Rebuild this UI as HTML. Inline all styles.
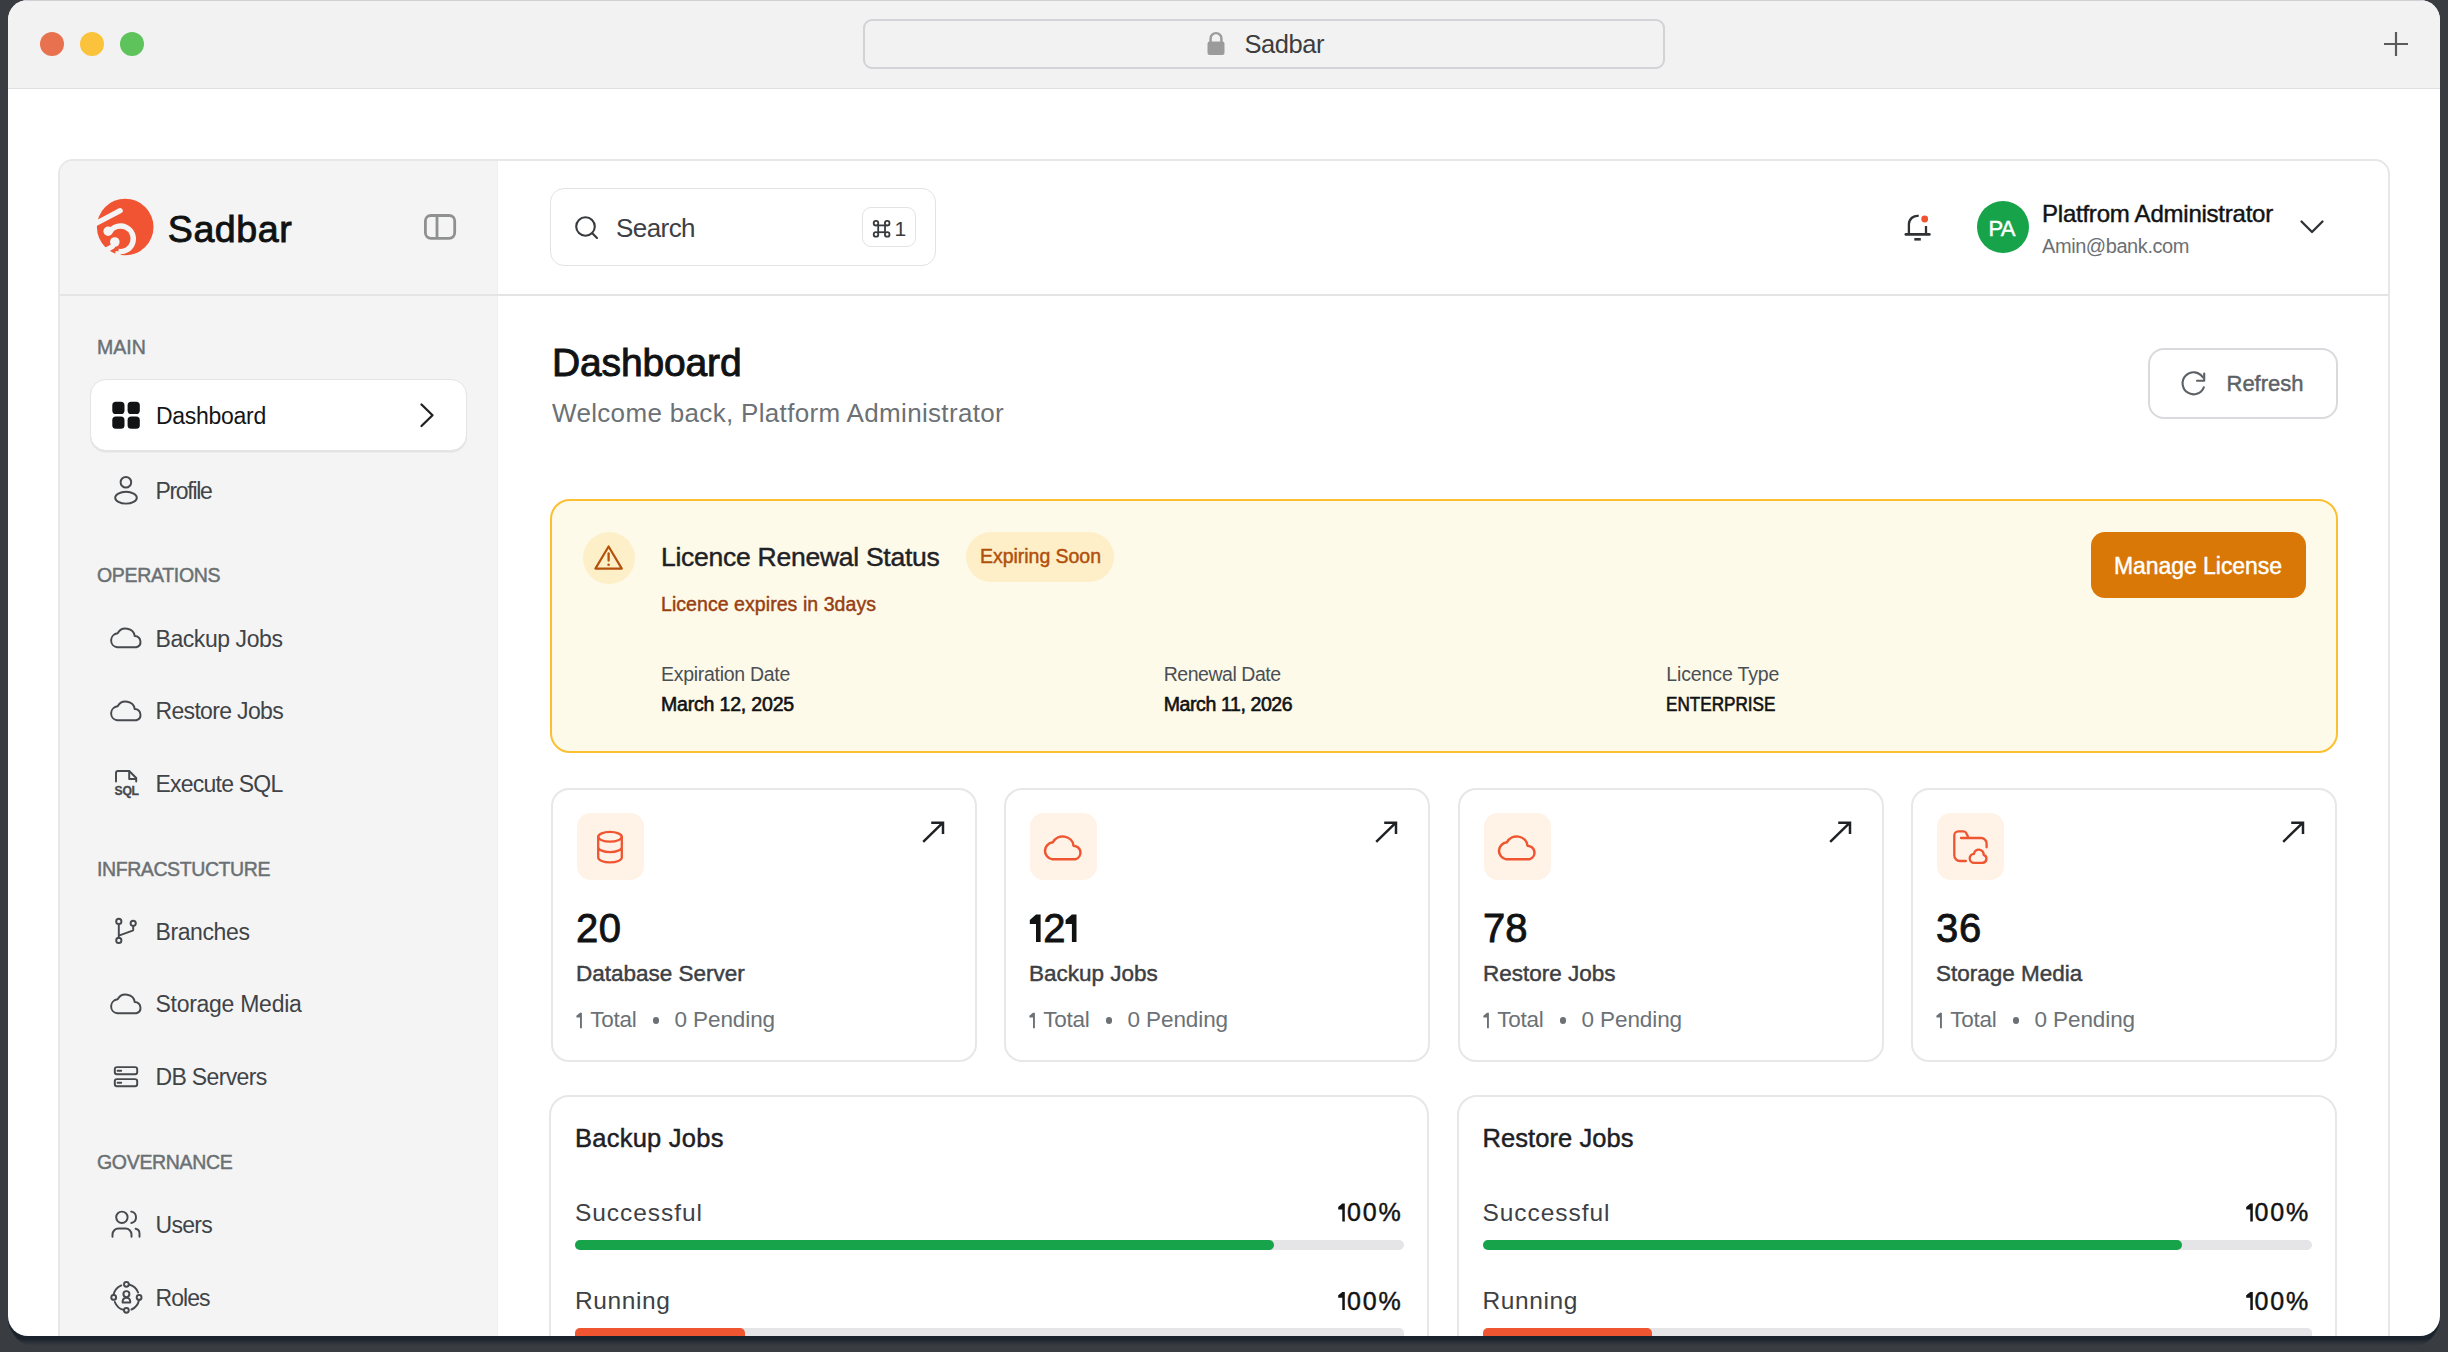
<!DOCTYPE html>
<html><head><meta charset="utf-8"><title>Sadbar</title>
<style>
*{box-sizing:border-box;margin:0;padding:0}
html,body{width:2448px;height:1352px;overflow:hidden;background:#393d41}
body{position:relative;font-family:"Liberation Sans",sans-serif}
.t{position:absolute;line-height:1;white-space:nowrap}
.b{position:absolute}
.i{position:absolute;overflow:visible}
.m{-webkit-text-stroke:0.45px currentColor}
.s{-webkit-text-stroke:0.85px currentColor}
.bd{font-weight:bold}
</style></head><body>
<div class="b" style="left:8px;top:1300px;width:2432px;height:41px;background:#1a222c;border-radius:0 0 22px 22px;"></div>
<div class="b" style="left:10px;top:1320px;width:2428px;height:26px;background:linear-gradient(#1a222c 72%,#393d41);border-radius:0 0 24px 24px;opacity:.85"></div>
<div id="win" style="position:absolute;left:8px;top:0;width:2432px;height:1336px;border-radius:20px;overflow:hidden;background:#fff"><div style="position:absolute;left:-8px;top:0;width:2448px;height:1352px">
<div class="b" style="left:0px;top:0px;width:2448px;height:88px;background:#f2f2f2"></div>
<div class="b" style="left:0px;top:0px;width:2448px;height:1px;background:#cfd0d4"></div>
<div class="b" style="left:0px;top:88px;width:2448px;height:1px;background:#dfdfe1"></div>
<div class="b" style="left:40px;top:32px;width:24px;height:24px;background:#e8714f;border-radius:50%"></div>
<div class="b" style="left:80px;top:32px;width:24px;height:24px;background:#fbc23c;border-radius:50%"></div>
<div class="b" style="left:120px;top:32px;width:24px;height:24px;background:#5ec35b;border-radius:50%"></div>
<div class="b" style="left:863px;top:19px;width:802px;height:50px;border:2px solid #d2d2d7;border-radius:9px;background:#f2f2f2"></div>
<svg class="i" style="left:1204px;top:28px;" width="24" height="30" viewBox="1204 28 24 30" fill="none"><path d="M1210.6 42 V38.5 A5.4 5.4 0 0 1 1221.4 38.5 V42" stroke="#9b9b9b" stroke-width="2.4"/><rect x="1207.5" y="41.5" width="17" height="13.5" rx="2.2" fill="#9b9b9b"/></svg>
<div class="t " style="left:1244.5px;top:31.71px;font-size:25.5px;color:#3d3d3d;letter-spacing:-0.454px;">Sadbar</div>
<svg class="i" style="left:2380px;top:28px;" width="32" height="32" viewBox="2380 28 32 32" fill="none"><path d="M2384 44 H2408 M2396 32 V56" stroke="#5b5b5b" stroke-width="2.2"/></svg>
<div class="b" style="left:58px;top:159px;width:2332px;height:1241px;border:2px solid #e7e7e8;border-radius:15px;background:#fff;"></div>
<div class="b" style="left:60px;top:161px;width:438px;height:1239px;background:#f4f4f4;border-radius:13px 0 0 0;"></div>
<div class="b" style="left:497px;top:161px;width:1px;height:1239px;background:#f0f0f0"></div>
<div class="b" style="left:60px;top:294px;width:2328px;height:1.6000000000000227px;background:#e4e4e6"></div>
<svg class="i" style="left:94px;top:195px;" width="64" height="65" viewBox="94 195 64 65" fill="none"><circle cx="125.2" cy="227" r="28.3" fill="#f05433"/><path d="M93 225 L120.2 210.6" stroke="#f4f4f4" stroke-width="5.2" stroke-linecap="round"/><path d="M109.65 232 A12.8 12.8 0 1 1 118.3 251.4" stroke="#f4f4f4" stroke-width="5.4"/><path d="M118.3 251.4 L117.5 258" stroke="#f4f4f4" stroke-width="5.4"/><circle cx="108.1" cy="231.3" r="4.7" fill="#f4f4f4"/><circle cx="114.8" cy="242" r="4.8" fill="#f4f4f4"/><path d="M112.5 246.5 L99 254" stroke="#f4f4f4" stroke-width="5" stroke-linecap="round"/></svg>
<div class="t " style="left:167.8px;top:210.86px;font-size:37.6px;color:#101212;letter-spacing:0.542px;-webkit-text-stroke:0.9px #101212">Sadbar</div>
<svg class="i" style="left:420px;top:210px;" width="40" height="34" viewBox="420 210 40 34" fill="none"><rect x="425.4" y="215.5" width="29.3" height="22.8" rx="5.5" stroke="#8f9191" stroke-width="2.8"/><path d="M437 215.5 V238.3" stroke="#8f9191" stroke-width="2.8"/></svg>
<div class="b" style="left:550px;top:188px;width:386px;height:78px;border:1.6px solid #e3e3e4;border-radius:14px;background:#fff"></div>
<svg class="i" style="left:570px;top:210px;" width="32" height="34" viewBox="570 210 32 34" fill="none"><circle cx="585.5" cy="226.5" r="9.3" stroke="#383b3e" stroke-width="2.1"/><path d="M592.3 233.3 L597 238" stroke="#383b3e" stroke-width="2.1" stroke-linecap="round"/></svg>
<div class="t " style="left:616px;top:215.19px;font-size:26px;color:#3d4044;letter-spacing:-0.563px;">Search</div>
<div class="b" style="left:862px;top:207px;width:54px;height:40px;border:1.6px solid #e3e3e4;border-radius:9px;background:#fff"></div>
<svg class="i" style="left:870px;top:218px;" width="22" height="20" viewBox="870 218 22 20" fill="none"><rect x="878.2" y="225.4" width="6.8" height="6.8" stroke="#383b3e" stroke-width="1.8"/><circle cx="876" cy="223.2" r="2.3" stroke="#383b3e" stroke-width="1.8"/><circle cx="887.2" cy="223.2" r="2.3" stroke="#383b3e" stroke-width="1.8"/><circle cx="876" cy="234.4" r="2.3" stroke="#383b3e" stroke-width="1.8"/><circle cx="887.2" cy="234.4" r="2.3" stroke="#383b3e" stroke-width="1.8"/></svg>
<div class="t " style="left:894.5px;top:217.72px;font-size:21px;color:#383b3e;letter-spacing:-2.180px;">1</div>
<svg class="i" style="left:1900px;top:210px;" width="35" height="35" viewBox="1900 210 35 35" fill="none"><path d="M1908.9 233.3 V224 A8.5 8.5 0 0 1 1918.7 215.9" stroke="#2f3235" stroke-width="2.3"/><path d="M1926 226 V233.3" stroke="#2f3235" stroke-width="2.3"/><path d="M1905.8 234.4 H1929.4" stroke="#2f3235" stroke-width="2.6" stroke-linecap="round"/><path d="M1914.3 239.3 H1920.8" stroke="#2f3235" stroke-width="2.6"/><circle cx="1924.7" cy="219" r="3.4" fill="#f0532f"/></svg>
<div class="b" style="left:1977px;top:201px;width:52px;height:52px;background:#17a34a;border-radius:50%"></div>
<div class="t m" style="left:1988.5px;top:218.37px;font-size:22px;color:#ffffff;letter-spacing:-0.857px;">PA</div>
<div class="t m" style="left:2042px;top:201.68px;font-size:24px;color:#121314;letter-spacing:-0.231px;">Platfrom Administrator</div>
<div class="t " style="left:2042px;top:236.07px;font-size:20px;color:#6b7074;letter-spacing:-0.429px;">Amin@bank.com</div>
<svg class="i" style="left:2296px;top:216px;" width="32" height="22" viewBox="2296 216 32 22" fill="none"><path d="M2301.5 221.5 L2312 232 L2322.5 221.5" stroke="#2f3235" stroke-width="2.3" stroke-linecap="round" stroke-linejoin="round"/></svg>
<div class="t m" style="left:97px;top:338.09px;font-size:19.5px;color:#6a7073;letter-spacing:0.062px;">MAIN</div>
<div class="t m" style="left:97px;top:566.49px;font-size:19.5px;color:#6a7073;letter-spacing:-0.321px;">OPERATIONS</div>
<div class="t m" style="left:97px;top:860.29px;font-size:19.5px;color:#6a7073;letter-spacing:-0.411px;">INFRACSTUCTURE</div>
<div class="t m" style="left:97px;top:1152.89px;font-size:19.5px;color:#6a7073;letter-spacing:-0.319px;">GOVERNANCE</div>
<div class="b" style="left:90px;top:379px;width:376.5px;height:72px;background:#fff;border:1.7px solid #e4e4e6;border-radius:16px;box-shadow:0 1.5px 0.5px #e3e3e5"></div>
<svg class="i" style="left:108px;top:398px;" width="36" height="34" viewBox="108 398 36 34" fill="none"><rect x="112.3" y="401.8" width="12.2" height="12.2" rx="3.6" fill="#121314"/><rect x="127.6" y="401.8" width="12.2" height="12.2" rx="3.6" fill="#121314"/><rect x="112.3" y="416.6" width="12.2" height="12.2" rx="3.6" fill="#121314"/><rect x="127.6" y="416.6" width="12.2" height="12.2" rx="3.6" fill="#121314"/></svg>
<div class="t " style="left:156px;top:404.53px;font-size:23px;color:#141516;letter-spacing:-0.280px;">Dashboard</div>
<svg class="i" style="left:416px;top:400px;" width="24" height="30" viewBox="416 400 24 30" fill="none"><path d="M421.5 404.5 L432.5 415.2 L421.5 426" stroke="#1f2123" stroke-width="2.3" stroke-linecap="round" stroke-linejoin="round"/></svg>
<div class="t " style="left:155.5px;top:479.73px;font-size:23px;color:#404347;letter-spacing:-1.313px;">Profile</div>
<div class="t " style="left:155.5px;top:627.53px;font-size:23px;color:#404347;letter-spacing:-0.427px;">Backup Jobs</div>
<svg class="i" style="left:108px;top:625.2px;" width="36" height="26.0" viewBox="108 625.2 36 26.0" fill="none"><g transform="translate(0 0.0) translate(125.8 647.5) scale(1.10 1.03) translate(-125.8 -647.5)"><path d="M118 647.5 H135.3 A5.6 5.6 0 0 0 133.9 636.6 A8.2 8.2 0 0 0 118.4 633.9 A6.9 6.9 0 0 0 118 647.5 Z" stroke="#46494d" stroke-width="1.95" stroke-linecap="round" stroke-linejoin="round" vector-effect="non-scaling-stroke"/></g></svg>
<div class="t " style="left:155.5px;top:700.23px;font-size:23px;color:#404347;letter-spacing:-0.668px;">Restore Jobs</div>
<svg class="i" style="left:108px;top:697.9000000000001px;" width="36" height="26.0" viewBox="108 697.9000000000001 36 26.0" fill="none"><g transform="translate(0 72.70000000000005) translate(125.8 647.5) scale(1.10 1.03) translate(-125.8 -647.5)"><path d="M118 647.5 H135.3 A5.6 5.6 0 0 0 133.9 636.6 A8.2 8.2 0 0 0 118.4 633.9 A6.9 6.9 0 0 0 118 647.5 Z" stroke="#46494d" stroke-width="1.95" stroke-linecap="round" stroke-linejoin="round" vector-effect="non-scaling-stroke"/></g></svg>
<div class="t " style="left:155.5px;top:773.13px;font-size:23px;color:#404347;letter-spacing:-0.775px;">Execute SQL</div>
<div class="t " style="left:155.5px;top:920.93px;font-size:23px;color:#404347;letter-spacing:-0.396px;">Branches</div>
<div class="t " style="left:155.5px;top:993.43px;font-size:23px;color:#404347;letter-spacing:-0.277px;">Storage Media</div>
<svg class="i" style="left:108px;top:991.1px;" width="36" height="26.0" viewBox="108 991.1 36 26.0" fill="none"><g transform="translate(0 365.9) translate(125.8 647.5) scale(1.10 1.03) translate(-125.8 -647.5)"><path d="M118 647.5 H135.3 A5.6 5.6 0 0 0 133.9 636.6 A8.2 8.2 0 0 0 118.4 633.9 A6.9 6.9 0 0 0 118 647.5 Z" stroke="#46494d" stroke-width="1.95" stroke-linecap="round" stroke-linejoin="round" vector-effect="non-scaling-stroke"/></g></svg>
<div class="t " style="left:155.5px;top:1065.83px;font-size:23px;color:#404347;letter-spacing:-0.658px;">DB Servers</div>
<div class="t " style="left:155.5px;top:1214.33px;font-size:23px;color:#404347;letter-spacing:-0.712px;">Users</div>
<div class="t " style="left:155.5px;top:1286.53px;font-size:23px;color:#404347;letter-spacing:-0.961px;">Roles</div>
<svg class="i" style="left:108px;top:470px;" width="36" height="40" viewBox="108 470 36 40" fill="none"><circle cx="125.9" cy="482.2" r="5.3" stroke="#46494d" stroke-width="1.95" stroke-linecap="round" stroke-linejoin="round"/><ellipse cx="126" cy="497.7" rx="10.8" ry="5.9" stroke="#46494d" stroke-width="1.95" stroke-linecap="round" stroke-linejoin="round"/></svg>
<svg class="i" style="left:108px;top:764px;" width="38" height="36" viewBox="108 764 38 36" fill="none"><path d="M116 781.6 V773 A2 2 0 0 1 118 771 H129.2 L136.2 778 V781.6" stroke="#46494d" stroke-width="1.95" stroke-linecap="round" stroke-linejoin="round"/><path d="M129.2 771.2 V778.9 H136" stroke="#46494d" stroke-width="1.95" stroke-linecap="round" stroke-linejoin="round"/><text x="114.6" y="794.6" font-family="Liberation Sans" font-weight="bold" font-size="12.2" fill="#46494d" letter-spacing="-0.3" stroke="#46494d" stroke-width="0.3">SQL</text></svg>
<svg class="i" style="left:108px;top:912px;" width="38" height="38" viewBox="108 912 38 38" fill="none"><circle cx="118.8" cy="921.4" r="2.6" stroke="#46494d" stroke-width="1.95" stroke-linecap="round" stroke-linejoin="round"/><circle cx="118.8" cy="940.4" r="2.6" stroke="#46494d" stroke-width="1.95" stroke-linecap="round" stroke-linejoin="round"/><circle cx="133.2" cy="923.3" r="2.6" stroke="#46494d" stroke-width="1.95" stroke-linecap="round" stroke-linejoin="round"/><path d="M118.8 924 V937.8 M118.8 935.6 L132.6 930.7 Q133.2 930.5 133.2 929.9 V926" stroke="#46494d" stroke-width="1.95" stroke-linecap="round" stroke-linejoin="round"/></svg>
<svg class="i" style="left:108px;top:1060px;" width="38" height="34" viewBox="108 1060 38 34" fill="none"><rect x="114.8" y="1067.1" width="22.4" height="7.2" rx="2.2" stroke="#46494d" stroke-width="1.95" stroke-linecap="round" stroke-linejoin="round"/><rect x="114.8" y="1079.1" width="22.4" height="7.2" rx="2.2" stroke="#46494d" stroke-width="1.95" stroke-linecap="round" stroke-linejoin="round"/><path d="M117.6 1070.7 H121.2 M117.6 1082.7 H121.2" stroke="#46494d" stroke-width="1.95" stroke-linecap="round" stroke-linejoin="round"/></svg>
<svg class="i" style="left:106px;top:1204px;" width="40" height="40" viewBox="106 1204 40 40" fill="none"><circle cx="121.9" cy="1217.3" r="5.7" stroke="#46494d" stroke-width="1.95" stroke-linecap="round" stroke-linejoin="round"/><path d="M131.3 1211.6 A5.8 5.8 0 0 1 131.3 1223" stroke="#46494d" stroke-width="1.95" stroke-linecap="round" stroke-linejoin="round"/><path d="M112.5 1236.8 V1234.5 A6 6 0 0 1 118.5 1228.5 H125.5 A6 6 0 0 1 131.5 1234.5 V1236.8" stroke="#46494d" stroke-width="1.95" stroke-linecap="round" stroke-linejoin="round"/><path d="M135.6 1228.8 A4.8 4.8 0 0 1 139.5 1233.5 V1236.8" stroke="#46494d" stroke-width="1.95" stroke-linecap="round" stroke-linejoin="round"/></svg>
<svg class="i" style="left:104px;top:1274px;" width="46" height="46" viewBox="104 1274 46 46" fill="none"><circle cx="126.4" cy="1284.3" r="2.4" stroke="#46494d" stroke-width="1.95" stroke-linecap="round" stroke-linejoin="round"/><circle cx="113.7" cy="1297.4" r="2.4" stroke="#46494d" stroke-width="1.95" stroke-linecap="round" stroke-linejoin="round"/><circle cx="139.1" cy="1297.4" r="2.4" stroke="#46494d" stroke-width="1.95" stroke-linecap="round" stroke-linejoin="round"/><circle cx="126.4" cy="1310.3" r="2.4" stroke="#46494d" stroke-width="1.95" stroke-linecap="round" stroke-linejoin="round"/><path d="M121.3 1285.4 A13 13 0 0 0 113.5 1294.8 M128.9 1284.5 A13 13 0 0 1 138.1 1292.5 M139 1300 A13 13 0 0 1 131.5 1309.5 M124 1310 A13 13 0 0 1 114.8 1302" stroke="#46494d" stroke-width="1.95" stroke-linecap="round" stroke-linejoin="round"/><circle cx="126.4" cy="1294.1" r="3" stroke="#46494d" stroke-width="1.95" stroke-linecap="round" stroke-linejoin="round"/><path d="M122.6 1302.5 V1301.5 A3.8 3.8 0 0 1 130.2 1301.5 V1302.5 Z" stroke="#46494d" stroke-width="1.95" stroke-linecap="round" stroke-linejoin="round"/></svg>
<div class="t " style="left:552px;top:342.78px;font-size:39px;color:#111213;letter-spacing:-0.144px;-webkit-text-stroke:0.95px #111213">Dashboard</div>
<div class="t " style="left:552px;top:399.99px;font-size:26px;color:#6b7175;letter-spacing:0.327px;">Welcome back, Platform Administrator</div>
<div class="b" style="left:2148px;top:348px;width:190px;height:71px;border:2px solid #d8dadd;border-radius:16px;background:#fff"></div>
<svg class="i" style="left:2176px;top:366px;" width="36" height="36" viewBox="2176 366 36 36" fill="none"><path d="M2203.8 387.3 A11 11 0 1 1 2202.8 377.3" stroke="#5c6166" stroke-width="2.1" stroke-linecap="round"/><path d="M2204.2 373.6 V380.8 H2197" stroke="#5c6166" stroke-width="2.1" stroke-linecap="round" stroke-linejoin="round"/></svg>
<div class="t m" style="left:2226.5px;top:373.37px;font-size:22px;color:#5d6266;letter-spacing:-0.005px;">Refresh</div>
<div class="b" style="left:550px;top:499px;width:1788px;height:254px;border:2px solid #fbbf2f;border-radius:20px;background:#fefae9"></div>
<div class="b" style="left:583px;top:532px;width:52px;height:52px;background:#fdf0c9;border-radius:50%"></div>
<svg class="i" style="left:590px;top:540px;" width="38" height="36" viewBox="590 540 38 36" fill="none"><path d="M608.6 546.5 L621.8 568.6 H595.4 Z" stroke="#b4520b" stroke-width="2.2" stroke-linejoin="round"/><path d="M608.6 553.5 V560.5" stroke="#b4520b" stroke-width="2.3" stroke-linecap="round"/><circle cx="608.6" cy="564.8" r="1.3" fill="#b4520b"/></svg>
<div class="t m" style="left:661px;top:543.56px;font-size:26.5px;color:#1e2227;letter-spacing:-0.264px;">Licence Renewal Status</div>
<div class="b" style="left:966px;top:532px;width:148px;height:50px;background:#feefc8;border-radius:25px"></div>
<div class="t m" style="left:980px;top:546.99px;font-size:19.5px;color:#b1500c;letter-spacing:-0.032px;">Expiring Soon</div>
<div class="t m" style="left:661px;top:595.49px;font-size:19.5px;color:#973f13;letter-spacing:0.061px;">Licence expires in 3days</div>
<div class="t " style="left:661px;top:664.99px;font-size:19.5px;color:#4a4f55;letter-spacing:-0.288px;">Expiration Date</div>
<div class="t " style="left:661px;top:694.69px;font-size:19.5px;color:#111213;letter-spacing:-0.179px;-webkit-text-stroke:0.6px #111213">March 12, 2025</div>
<div class="t " style="left:1163.7px;top:664.99px;font-size:19.5px;color:#4a4f55;letter-spacing:-0.457px;">Renewal Date</div>
<div class="t " style="left:1163.7px;top:694.69px;font-size:19.5px;color:#111213;letter-spacing:-0.390px;-webkit-text-stroke:0.6px #111213">March 11, 2026</div>
<div class="t " style="left:1666.3px;top:664.99px;font-size:19.5px;color:#4a4f55;letter-spacing:-0.130px;">Licence Type</div>
<div class="t " style="left:1666.3px;top:694.69px;font-size:19.5px;color:#111213;transform:scaleX(0.8780);transform-origin:0 0;-webkit-text-stroke:0.6px #111213">ENTERPRISE</div>
<div class="b" style="left:2091px;top:532px;width:215px;height:66px;background:#d97707;border-radius:14px"></div>
<div class="t m" style="left:2114px;top:554.53px;font-size:23px;color:#ffffff;letter-spacing:-0.056px;">Manage License</div>
<div class="b" style="left:551px;top:788px;width:426px;height:274px;border:2px solid #e7e7e8;border-radius:18px;background:#fff"></div>
<div class="b" style="left:576.5px;top:813px;width:67.0px;height:67px;background:#fff2e7;border-radius:14px"></div>
<svg class="i" style="left:590.0px;top:824.5px;" width="40.0" height="44.0" viewBox="590.0 824.5 40.0 44.0" fill="none"><ellipse cx="610.0" cy="836.3" rx="11.8" ry="4.9" stroke="#ef5530" stroke-width="2.3" stroke-linecap="round" stroke-linejoin="round"/><path d="M598.2 836.3 V857.0 A11.8 4.9 0 0 0 621.8 857.0 V836.3 M598.2 846.7 A11.8 4.9 0 0 0 621.8 846.7" stroke="#ef5530" stroke-width="2.3" stroke-linecap="round" stroke-linejoin="round"/></svg>
<svg class="i" style="left:918px;top:817px;" width="30" height="31" viewBox="918 817 30 31" fill="none"><path d="M923.2 841.8 L942.6 822.9 M931.2 822.8 H943 V834" stroke="#1f2225" stroke-width="2.5" stroke-linecap="butt" stroke-linejoin="miter"/></svg>
<div class="t s" style="left:576px;top:908.13px;font-size:40px;color:#111213;letter-spacing:0.503px;">20</div>
<div class="t m" style="left:576px;top:962.55px;font-size:22.5px;color:#3c4044;">Database Server</div>
<svg class="i" style="left:573px;top:1008px;" width="16" height="24" viewBox="573 1008 16 24" fill="none"><path d="M581.90 1012.80 V1028.30 H580.00 V1017.60 H576.40 V1015.80 L580.00 1012.80 Z" fill="#6b7175"/></svg>
<div class="t " style="left:590.3px;top:1009.25px;font-size:22.5px;color:#6b7175;letter-spacing:-0.246px;">Total</div>
<div class="b" style="left:652.8px;top:1017.2px;width:6.400000000000091px;height:6.399999999999977px;background:#6b7175;border-radius:50%"></div>
<div class="t " style="left:674.5px;top:1009.25px;font-size:22.5px;color:#6b7175;letter-spacing:-0.094px;">0 Pending</div>
<div class="b" style="left:1004px;top:788px;width:426px;height:274px;border:2px solid #e7e7e8;border-radius:18px;background:#fff"></div>
<div class="b" style="left:1029.5px;top:813px;width:67.0px;height:67px;background:#fff2e7;border-radius:14px"></div>
<svg class="i" style="left:1037.0px;top:826.5px;" width="52.0" height="40.0" viewBox="1037.0 826.5 52.0 40.0" fill="none"><g transform="translate(1063.0 846.9) scale(1.33 1.26) translate(-126 -638)"><path d="M118 647.5 H135.3 A5.6 5.6 0 0 0 133.9 636.6 A8.2 8.2 0 0 0 118.4 633.9 A6.9 6.9 0 0 0 118 647.5 Z" stroke="#ef5530" stroke-width="2.5" vector-effect="non-scaling-stroke" stroke-linejoin="round"/></g></svg>
<svg class="i" style="left:1371px;top:817px;" width="30" height="31" viewBox="1371 817 30 31" fill="none"><path d="M1376.2 841.8 L1395.6 822.9 M1384.2 822.8 H1396 V834" stroke="#1f2225" stroke-width="2.5" stroke-linecap="butt" stroke-linejoin="miter"/></svg>
<svg class="i" style="left:1025px;top:910px;" width="57" height="36" viewBox="1025 910 57 36" fill="none"><path d="M1040.60 914.50 V942.00 H1036.00 V924.10 H1029.80 V920.10 L1036.00 914.50 Z M1076.50 914.50 V942.00 H1071.90 V924.10 H1065.60 V920.10 L1071.90 914.50 Z" fill="#111213"/></svg>
<div class="t s" style="left:1043.2px;top:908.13px;font-size:40px;color:#111213;">2</div>
<div class="t m" style="left:1029px;top:962.55px;font-size:22.5px;color:#3c4044;">Backup Jobs</div>
<svg class="i" style="left:1026px;top:1008px;" width="16" height="24" viewBox="1026 1008 16 24" fill="none"><path d="M1034.90 1012.80 V1028.30 H1033.00 V1017.60 H1029.40 V1015.80 L1033.00 1012.80 Z" fill="#6b7175"/></svg>
<div class="t " style="left:1043.3px;top:1009.25px;font-size:22.5px;color:#6b7175;letter-spacing:-0.246px;">Total</div>
<div class="b" style="left:1105.8px;top:1017.2px;width:6.400000000000091px;height:6.399999999999977px;background:#6b7175;border-radius:50%"></div>
<div class="t " style="left:1127.5px;top:1009.25px;font-size:22.5px;color:#6b7175;letter-spacing:-0.094px;">0 Pending</div>
<div class="b" style="left:1458px;top:788px;width:426px;height:274px;border:2px solid #e7e7e8;border-radius:18px;background:#fff"></div>
<div class="b" style="left:1483.5px;top:813px;width:67.0px;height:67px;background:#fff2e7;border-radius:14px"></div>
<svg class="i" style="left:1491.0px;top:826.5px;" width="52.0" height="40.0" viewBox="1491.0 826.5 52.0 40.0" fill="none"><g transform="translate(1517.0 846.9) scale(1.33 1.26) translate(-126 -638)"><path d="M118 647.5 H135.3 A5.6 5.6 0 0 0 133.9 636.6 A8.2 8.2 0 0 0 118.4 633.9 A6.9 6.9 0 0 0 118 647.5 Z" stroke="#ef5530" stroke-width="2.5" vector-effect="non-scaling-stroke" stroke-linejoin="round"/></g></svg>
<svg class="i" style="left:1825px;top:817px;" width="30" height="31" viewBox="1825 817 30 31" fill="none"><path d="M1830.2 841.8 L1849.6 822.9 M1838.2 822.8 H1850 V834" stroke="#1f2225" stroke-width="2.5" stroke-linecap="butt" stroke-linejoin="miter"/></svg>
<div class="t s" style="left:1483px;top:908.13px;font-size:40px;color:#111213;letter-spacing:0.003px;">78</div>
<div class="t m" style="left:1483px;top:962.55px;font-size:22.5px;color:#3c4044;">Restore Jobs</div>
<svg class="i" style="left:1480px;top:1008px;" width="16" height="24" viewBox="1480 1008 16 24" fill="none"><path d="M1488.90 1012.80 V1028.30 H1487.00 V1017.60 H1483.40 V1015.80 L1487.00 1012.80 Z" fill="#6b7175"/></svg>
<div class="t " style="left:1497.3px;top:1009.25px;font-size:22.5px;color:#6b7175;letter-spacing:-0.246px;">Total</div>
<div class="b" style="left:1559.8px;top:1017.2px;width:6.400000000000091px;height:6.399999999999977px;background:#6b7175;border-radius:50%"></div>
<div class="t " style="left:1581.5px;top:1009.25px;font-size:22.5px;color:#6b7175;letter-spacing:-0.094px;">0 Pending</div>
<div class="b" style="left:1911px;top:788px;width:426px;height:274px;border:2px solid #e7e7e8;border-radius:18px;background:#fff"></div>
<div class="b" style="left:1936.5px;top:813px;width:67.0px;height:67px;background:#fff2e7;border-radius:14px"></div>
<svg class="i" style="left:1946px;top:822px;" width="48" height="48" viewBox="1946 822 48 48" fill="none"><path d="M1965.9 861 H1960 A5.7 5.7 0 0 1 1954.3 855.3 V835.4 A4 4 0 0 1 1958.3 831.4 H1963.3 A3.5 3.5 0 0 1 1966.5 833.5 L1968.6 837.9 M1961 838 H1981 A5.6 5.6 0 0 1 1986.6 843.6 V847.3" stroke="#ef5530" stroke-width="2.3" stroke-linecap="round" stroke-linejoin="round"/><path d="M1974.3 862.8 H1982.5 A4.1 4.1 0 0 0 1983.6 854.8 A4.6 4.6 0 0 0 1974 853.9 A4.3 4.3 0 0 0 1974.3 862.8 Z" stroke="#ef5530" stroke-width="2.3" stroke-linecap="round" stroke-linejoin="round"/></svg>
<svg class="i" style="left:2278px;top:817px;" width="30" height="31" viewBox="2278 817 30 31" fill="none"><path d="M2283.2 841.8 L2302.6 822.9 M2291.2 822.8 H2303 V834" stroke="#1f2225" stroke-width="2.5" stroke-linecap="butt" stroke-linejoin="miter"/></svg>
<div class="t s" style="left:1936px;top:908.13px;font-size:40px;color:#111213;letter-spacing:0.753px;">36</div>
<div class="t m" style="left:1936px;top:962.55px;font-size:22.5px;color:#3c4044;">Storage Media</div>
<svg class="i" style="left:1933px;top:1008px;" width="16" height="24" viewBox="1933 1008 16 24" fill="none"><path d="M1941.90 1012.80 V1028.30 H1940.00 V1017.60 H1936.40 V1015.80 L1940.00 1012.80 Z" fill="#6b7175"/></svg>
<div class="t " style="left:1950.3px;top:1009.25px;font-size:22.5px;color:#6b7175;letter-spacing:-0.246px;">Total</div>
<div class="b" style="left:2012.8px;top:1017.2px;width:6.400000000000091px;height:6.399999999999977px;background:#6b7175;border-radius:50%"></div>
<div class="t " style="left:2034.5px;top:1009.25px;font-size:22.5px;color:#6b7175;letter-spacing:-0.094px;">0 Pending</div>
<div class="b" style="left:549px;top:1095px;width:880px;height:405px;border:2px solid #e7e7e8;border-radius:20px;background:#fff"></div>
<div class="t m" style="left:575px;top:1125.61px;font-size:25.5px;color:#1d2024;letter-spacing:0.246px;">Backup Jobs</div>
<div class="t " style="left:575px;top:1200.76px;font-size:24.5px;color:#3d4145;letter-spacing:0.953px;">Successful</div>
<svg class="i" style="left:1335px;top:1200px;" width="14" height="25" viewBox="1335 1200 14 25" fill="none"><path d="M1344.80 1203.60 V1221.60 H1342.30 V1209.40 H1338.20 V1207.00 L1342.30 1203.60 Z" fill="#121314"/></svg>
<div class="t m" style="right:1045.5px;top:1200.33px;font-size:25px;color:#121314;letter-spacing:1.821px;">00%</div>
<div class="b" style="left:575px;top:1240px;width:829px;height:9.5px;background:#e5e5e7;border-radius:5px"></div>
<div class="b" style="left:575px;top:1240px;width:699px;height:9.5px;background:#17a34a;border-radius:5px"></div>
<div class="t " style="left:575px;top:1289.06px;font-size:24.5px;color:#3d4145;letter-spacing:0.591px;">Running</div>
<svg class="i" style="left:1335px;top:1288px;" width="14" height="25" viewBox="1335 1288 14 25" fill="none"><path d="M1344.80 1291.90 V1309.90 H1342.30 V1297.70 H1338.20 V1295.30 L1342.30 1291.90 Z" fill="#121314"/></svg>
<div class="t m" style="right:1045.5px;top:1288.63px;font-size:25px;color:#121314;letter-spacing:1.821px;">00%</div>
<div class="b" style="left:575px;top:1327.5px;width:829px;height:22.5px;background:#e5e5e7;border-radius:5px"></div>
<div class="b" style="left:575px;top:1327.5px;width:169.5px;height:22.5px;background:#ef5530;border-radius:5px"></div>
<div class="b" style="left:1456.5px;top:1095px;width:880.0px;height:405px;border:2px solid #e7e7e8;border-radius:20px;background:#fff"></div>
<div class="t m" style="left:1482.5px;top:1125.61px;font-size:25.5px;color:#1d2024;letter-spacing:0.064px;">Restore Jobs</div>
<div class="t " style="left:1482.5px;top:1200.76px;font-size:24.5px;color:#3d4145;letter-spacing:0.953px;">Successful</div>
<svg class="i" style="left:2242.5px;top:1200px;" width="14.0" height="25" viewBox="2242.5 1200 14.0 25" fill="none"><path d="M2252.30 1203.60 V1221.60 H2249.80 V1209.40 H2245.70 V1207.00 L2249.80 1203.60 Z" fill="#121314"/></svg>
<div class="t m" style="right:138.0px;top:1200.33px;font-size:25px;color:#121314;letter-spacing:1.821px;">00%</div>
<div class="b" style="left:1482.5px;top:1240px;width:829.0px;height:9.5px;background:#e5e5e7;border-radius:5px"></div>
<div class="b" style="left:1482.5px;top:1240px;width:699.0px;height:9.5px;background:#17a34a;border-radius:5px"></div>
<div class="t " style="left:1482.5px;top:1289.06px;font-size:24.5px;color:#3d4145;letter-spacing:0.591px;">Running</div>
<svg class="i" style="left:2242.5px;top:1288px;" width="14.0" height="25" viewBox="2242.5 1288 14.0 25" fill="none"><path d="M2252.30 1291.90 V1309.90 H2249.80 V1297.70 H2245.70 V1295.30 L2249.80 1291.90 Z" fill="#121314"/></svg>
<div class="t m" style="right:138.0px;top:1288.63px;font-size:25px;color:#121314;letter-spacing:1.821px;">00%</div>
<div class="b" style="left:1482.5px;top:1327.5px;width:829.0px;height:22.5px;background:#e5e5e7;border-radius:5px"></div>
<div class="b" style="left:1482.5px;top:1327.5px;width:169.5px;height:22.5px;background:#ef5530;border-radius:5px"></div>
</div></div>
</body></html>
